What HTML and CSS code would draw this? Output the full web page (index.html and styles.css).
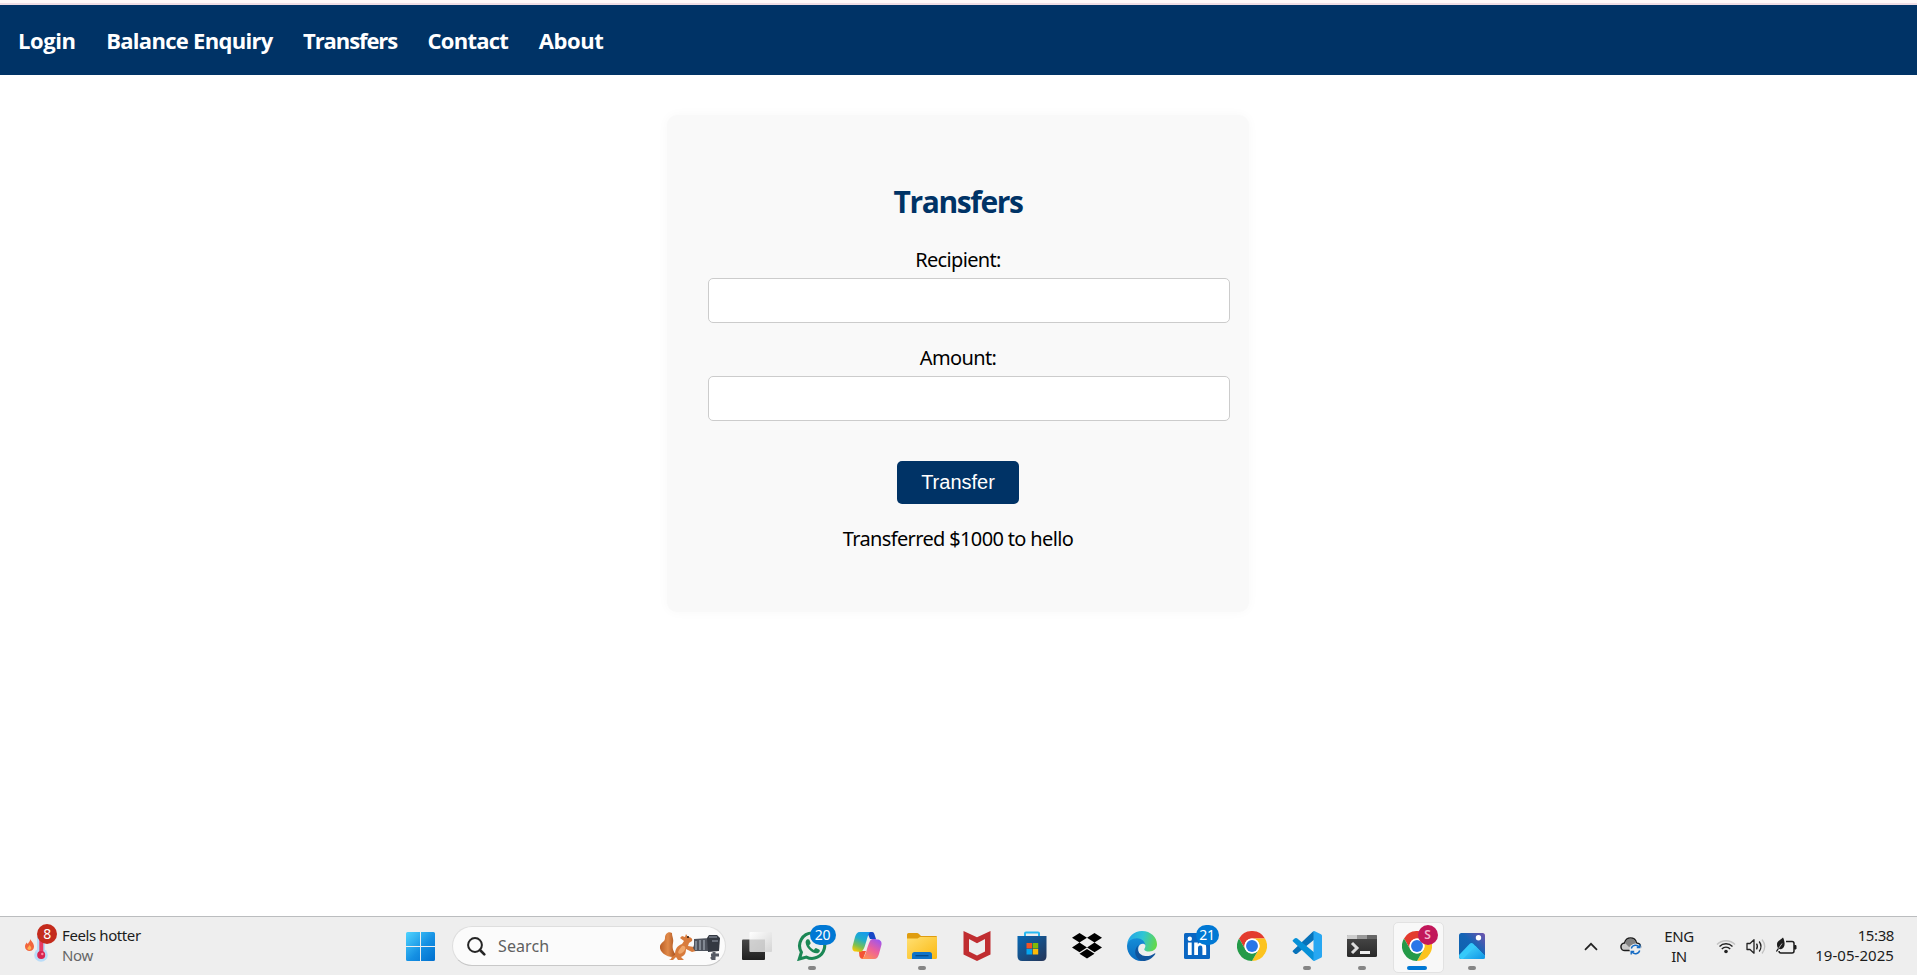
FILE: index.html
```html
<!DOCTYPE html>
<html lang="en">
<head>
<meta charset="utf-8">
<title>Transfers</title>
<link rel="stylesheet" href="styles.css">
</head>
<body>
<div class="top-strip"></div>
<nav class="nav">
  <a class="nav-link login">Login</a>
  <a class="nav-link balance">Balance Enquiry</a>
  <a class="nav-link transfers">Transfers</a>
  <a class="nav-link contact">Contact</a>
  <a class="nav-link about">About</a>
</nav>
<main class="main">
  <form class="card">
    <h2 class="title">Transfers</h2>
    <label class="label" for="recipient">Recipient:</label>
    <input class="field" id="recipient" type="text">
    <label class="label" for="amount">Amount:</label>
    <input class="field" id="amount" type="text">
    <button class="submit" type="button">Transfer</button>
    <p class="message">Transferred $1000 to hello</p>
  </form>
</main>
<footer class="taskbar">
  <div class="weather">
    <div class="weather-icon">
      <svg width="34" height="40" viewBox="0 0 34 40">
        <circle cx="17" cy="29" r="6.8" fill="#b9dcf8"/><path d="M13 10h8v17h-8z" fill="#b9dcf8"/>
        <path d="M15.3 10h4v16h-4z" fill="#e83a62"/><circle cx="17.2" cy="29" r="4" fill="#d82450"/><circle cx="18.3" cy="28" r="1.2" fill="#ff8ca5"/>
        <path d="M6 13c1 2 4 4 4 7.500a4.500 4.500 0 0 1-9 .2c0-2 1-3 1.600-4.200l1.200 1.400C5 16 6.400 15 6 13z" fill="#f2663d"/>
        <path d="M5.500 19c.6 1 2 2 1.800 3.600a2.200 2.200 0 0 1-4 0c0-1.200 1.800-2 2.200-3.600z" fill="#ffb052"/>
      </svg>
      <span class="badge red">8</span>
    </div>
    <div class="two-lines raised"><span class="line1">Feels hotter</span><span class="line2 muted">Now</span></div>
  </div>
  <div class="start">
    <svg width="29" height="29" viewBox="0 0 29 29"><defs><linearGradient id="win" gradientUnits="userSpaceOnUse" x1="0" y1="0" x2="29" y2="29"><stop offset="0" stop-color="#4fd4ff"/><stop offset=".55" stop-color="#1590e3"/><stop offset="1" stop-color="#006fce"/></linearGradient></defs>
    <path d="M1.500 0H14v14H0V1.500A1.500 1.500 0 0 1 1.500 0zM15 0h12.500A1.500 1.500 0 0 1 29 1.500V14H15zM0 15h14v14H1.500A1.500 1.500 0 0 1 0 27.500zM15 15h14v12.500a1.500 1.500 0 0 1-1.500 1.500H15z" fill="url(#win)"/></svg>
  </div>
  <div class="search">
    <svg class="search-icon" width="19" height="19" viewBox="0 0 19 19" fill="none" stroke="#252525"><circle cx="8" cy="8" r="6.900" stroke-width="2"/><path d="M13 13l4.300 4.300" stroke-width="2.600" stroke-linecap="round"/></svg>
    <span class="search-text">Search</span>
    <svg class="squirrel" width="62" height="32" viewBox="0 0 62 32">
      <defs><linearGradient id="tail" x1="0" x2="1"><stop offset="0" stop-color="#b95d25"/><stop offset=".5" stop-color="#e18a49"/><stop offset="1" stop-color="#a64d1b"/></linearGradient></defs>
      <path d="M14 27C7 27 0 22 1 16c1-4 5-4 5-8C6 4 9 1 13 3c0 4 2 6 1 10-1 5 0 8 3 12z" fill="url(#tail)"/>
      <path d="M12 29c1-3 2-3 4-4 0-6 2-9 7-11l2-3-4-3 2-2 3 1 1-3 2 3c3 0 5 2 4 4l-3 2-1 3 6 1 2 4-4 1-6-3c0 5-2 7-5 8l3 3h-6l-2-3-3 3h-4z" fill="#d87b3c"/>
      <path d="M23 16c4-1 5 4 0 7-3 2-5 0-3-3z" fill="#efa76b"/><circle cx="29" cy="7" r="1" fill="#2b160c"/>
      <path d="M35 9l16-1v13H36l-2-3 1-3z" fill="#4f545e"/><path d="M37 11v9M41 10v10M45 10v10" stroke="#949aa5" stroke-width="1.500"/>
      <path d="M48 8l2-3h8l3 3-1 13-11 1z" fill="#343942"/><path d="M50 7h8M53 11h6" stroke="#777e89" stroke-width="1.500"/><path d="M55 22v8M52 25h8M52 29l4-3" stroke="#555a64" stroke-width="3"/>
    </svg>
  </div>
  <div class="apps">
    <div class="app"><svg width="30" height="30" viewBox="0 0 30 30"><defs><linearGradient id="tvd" x1="0" y1="0" x2="0" y2="1"><stop offset="0" stop-color="#474747"/><stop offset="1" stop-color="#202020"/></linearGradient><linearGradient id="tvl" x1="0" y1="0" x2="1" y2="1"><stop offset="0" stop-color="#fff"/><stop offset="1" stop-color="#d4d4d4"/></linearGradient></defs><rect y="8.500" width="23" height="20.500" rx="1" fill="url(#tvd)"/><rect x="7.500" y="1" width="22.500" height="20" rx="1" fill="url(#tvl)"/><path d="M8 8.500h15V21H8z" fill="#bdbdbd" opacity=".65"/></svg></div>
    <div class="app"><svg width="30" height="30" viewBox="0 0 30 30" fill="none"><path d="M15.300 2A12.700 12.700 0 0 0 4.400 21.200L2.300 28l7.100-1.900A12.700 12.700 0 1 0 15.300 2z" stroke="#1b8755" stroke-width="3.100"/><path d="M10.500 8.200c-.8.1-2 1.400-1.900 3.200.3 4.800 5.800 10.400 10.900 10.900 1.800 0 3.300-1.200 3.300-2.600 0-.7-.2-1-.7-1.200l-2.700-1.300c-.6-.3-1-.1-1.400.4l-1.100 1.300c-2-.8-3.800-2.500-4.800-4.600l1.200-1.400c.4-.5.4-.9.2-1.400l-1.200-2.700c-.3-.6-.8-.8-1.800-.6z" fill="#1b8755"/></svg><span class="badge blue b20">20</span><i class="dot"></i></div>
    <div class="app"><svg width="30" height="30" viewBox="0 0 30 30"><defs><linearGradient id="cp1" x1=".6" y1="0" x2=".2" y2="1"><stop offset="0" stop-color="#169bea"/><stop offset=".35" stop-color="#20aeca"/><stop offset=".7" stop-color="#7cbf51"/><stop offset="1" stop-color="#ffc900"/></linearGradient><linearGradient id="cp2" x1=".8" y1="0" x2=".2" y2="1"><stop offset="0" stop-color="#9d55ef"/><stop offset=".5" stop-color="#ed609b"/><stop offset="1" stop-color="#ff9254"/></linearGradient></defs>
    <path d="M15 1h5c2 0 2.400 2 3 4l1 3h-6z" fill="#1647c6"/><path d="M7 20h7l-3 8c-2 0-3-1-3.600-3z" fill="#f45335"/>
    <path d="M8 1h10c-3 3-4 14-7 18-1 2-3 2-7 1.500-3 0-4-2-3.500-5L3 6C4 3 5 1 8 1z" fill="url(#cp1)"/>
    <path d="M22 28H10c4-2 5-13 8-18 1-2 3-2.300 7-1.600 3 0 5 2 4.500 5L27 23c-1 3-2 5-5 5z" fill="url(#cp2)"/></svg></div>
    <div class="app"><svg width="30" height="30" viewBox="0 0 30 30"><defs><linearGradient id="fo" x1="0" y1="0" x2="1" y2="1"><stop offset="0" stop-color="#ffe073"/><stop offset="1" stop-color="#fbb911"/></linearGradient></defs><path d="M0 3.500Q0 2 1.500 2H10q1 0 2 1l2 2h15q1 0 1 1v10H0z" fill="#df9d10"/><path d="M0 7.500h10.500L13 6h17v20.500q0 1.500-1.500 1.500h-27Q0 28 0 26.500z" fill="url(#fo)"/><path d="M5 28v-4.500Q5 21 7.500 21h15q2.500 0 2.500 2.500V28z" fill="#0f73c7"/><path d="M8.500 24.700h13" stroke="#064987" stroke-width="1.300"/></svg><i class="dot"></i></div>
    <div class="app"><svg width="30" height="30" viewBox="0 0 30 30"><path d="M1.500 0L15 6.300 28.500 0v23.500L15 30 1.500 23.500z" fill="#c02d30"/><path d="M7 8l8 4.300L23 8v12.500L15 24.500 7 20.500z" fill="#eee"/></svg></div>
    <div class="app"><svg width="30" height="30" viewBox="0 0 30 30"><defs><linearGradient id="st" x1="0" y1="0" x2="1" y2="1"><stop offset="0" stop-color="#0869b5"/><stop offset="1" stop-color="#263456"/></linearGradient></defs><path d="M8 6V2.300Q8 1.500 9 1.500h12q1 0 1 .8V6" fill="none" stroke="#27b9f2" stroke-width="2"/><path d="M.5 5h29v20q0 5-4.500 5H5Q.5 30 .5 25z" fill="url(#st)"/><path d="M9.500 12H15v5.500H9.500z" fill="#f35325"/><path d="M15.700 12h5.500v5.500h-5.500z" fill="#81bc06"/><path d="M9.500 18H15v5.500H9.500z" fill="#05a6f0"/><path d="M15.700 18h5.500v5.500h-5.500z" fill="#ffba08"/></svg></div>
    <div class="app"><svg width="30" height="30" viewBox="0 0 30 30"><path d="M7.500 2L15 6.800 7.500 11.600 0 6.800zM22.500 2L30 6.800l-7.500 4.800L15 6.800zM7.500 11.600l7.500 4.800-7.500 4.800L0 16.400zM22.500 11.600l7.500 4.800-7.500 4.800-7.500-4.800zM7.500 22.700L15 18l7.500 4.700L15 27.500z" fill="#000"/></svg></div>
    <div class="app"><svg width="30" height="30" viewBox="0 0 24 24"><defs><linearGradient id="ed1" x1="0" y1=".3" x2="1" y2=".5"><stop offset="0" stop-color="#24a4e8"/><stop offset=".5" stop-color="#2fc5d4"/><stop offset="1" stop-color="#64d849"/></linearGradient><linearGradient id="ed2" x1="0" y1="0" x2="0" y2="1"><stop offset="0" stop-color="#168ed8"/><stop offset="1" stop-color="#0969bd"/></linearGradient></defs>
    <path d="M.1 10.700C.8 4.500 5.600 0 12 0c7 0 12 5.100 12 10.600 0 3.500-2.700 5.800-6 5.800-3 0-4.500-1.100-4.200-1.900.5-1 .9-1.500.9-2.500 0-3-3-5-6.500-5C4.400 7 1 9 .1 10.700z" fill="url(#ed1)"/>
    <path d="M0 12c.2-4 4-6.300 8-6.300 3.500 0 6.500 2.400 6.700 5.600-1.500-2.100-5.200-1-5.700 2.300-.6 4.500 3 8.400 7.200 8.400-1.500 1.500-3.500 2-4.900 2C5 23.900 0 18.500 0 12z" fill="url(#ed2)"/>
    <path d="M9.700 11C7 13.500 8.700 19.400 14.500 20c3 .3 5.500-.8 7.500-2.100.5-.3.900.1.500.7C20.300 22 16.500 24 13 24c-5.600-.2-9.400-8.500-3.300-13z" fill="#11549c"/></svg></div>
    <div class="app"><svg width="30" height="30" viewBox="0 0 30 30"><rect x="2" y="2" width="26" height="26" rx="1.500" fill="#0a66c2"/><circle cx="7.800" cy="7.800" r="2.200" fill="#fff"/><path d="M5.900 11.500h3.800V24H5.900zM12.200 11.500h3.600v1.700c.7-1.200 2-2 3.900-2 3.800 0 4.500 2.500 4.500 5.900V24h-3.800v-6.200c0-1.500 0-3.300-2.100-3.300s-2.300 1.600-2.300 3.200V24h-3.800z" fill="#fff"/></svg><span class="badge blue b21">21</span></div>
    <div class="app"><svg width="30" height="30" viewBox="0 0 48 48"><g id="chrome"><circle cx="24" cy="24" r="24" fill="#fff"/><path d="M3.200 12A24 24 0 0 1 44.800 12H24a12 12 0 0 0-10.400 18z" fill="#e33b2e"/><path d="M44.800 12A24 24 0 0 1 24 48l10.400-18A12 12 0 0 0 24 12z" fill="#fcc31e"/><path d="M24 48A24 24 0 0 1 3.200 12l10.400 18a12 12 0 0 0 20.800 0z" fill="#249a48"/><circle cx="24" cy="24" r="12" fill="#fff"/><circle cx="24" cy="24" r="9.500" fill="#2a76e8"/></g></svg></div>
    <div class="app"><svg width="30" height="30" viewBox="0 0 30 30"><path d="M1 19.500L21.500 0l2 7.500L5 22.700q-1.300.8-2.400-.2L1 21q-1-.7 0-1.500z" fill="#0872b9"/><path d="M1 10.500L21.500 30l2-7.500L5 7.300Q3.700 6.500 2.600 7.500L1 9q-1 .7 0 1.500z" fill="#0791d8"/><path d="M21.500 0q.7-.1 1.300.2l6.200 3q1 .5 1 1.600v20.400q0 1.100-1 1.600l-6.200 3q-.7.300-1.300.2z" fill="#27a7f2"/></svg><i class="dot"></i></div>
    <div class="app"><svg width="30" height="30" viewBox="0 0 30 30"><defs><linearGradient id="te" x1="0" y1="0" x2="0" y2="1"><stop offset="0" stop-color="#4a4a4a"/><stop offset="1" stop-color="#292929"/></linearGradient></defs><rect y="4" width="30" height="22" rx="1.500" fill="url(#te)"/><path d="M0 8V5q0-1 1-1h9v4z" fill="#ccc"/><path d="M10 4h10v4H10z" fill="#999"/><path d="M20 4h9q1 0 1 1v3H20z" fill="#666"/><path d="M5 12l5 5-5 5" fill="none" stroke="#ddd" stroke-width="3"/><path d="M13 20h10v3H13z" fill="#eee"/></svg><i class="dot"></i></div>
    <div class="app active"><svg width="30" height="30" viewBox="0 0 48 48"><use href="#chrome"/></svg><span class="badge profile">S</span><i class="dot wide"></i></div>
    <div class="app"><svg width="30" height="30" viewBox="0 0 30 30"><defs><linearGradient id="ph" x1="0" y1="1" x2="1" y2="0"><stop offset="0" stop-color="#0d62ad"/><stop offset=".55" stop-color="#1464b5"/><stop offset="1" stop-color="#7253ad"/></linearGradient><linearGradient id="mt" x1="0" y1="0" x2="1" y2="1"><stop offset="0" stop-color="#4bdcff"/><stop offset="1" stop-color="#078ce2"/></linearGradient><clipPath id="pc"><rect x="2" y="2" width="26" height="26" rx="2.500"/></clipPath></defs><g clip-path="url(#pc)"><rect x="2" y="2" width="26" height="26" fill="url(#ph)"/><path d="M2 24l10.500-11q2-2 4 0L30 27v2H2z" fill="#35c9fa"/><path d="M5 29l9.500-10 4-4L30 27v3z" fill="url(#mt)"/></g><circle cx="21.500" cy="6.700" r="2.700" fill="#fff"/></svg><i class="dot"></i></div>
  </div>
  <div class="tray">
    <svg class="chevron" width="14" height="9" viewBox="0 0 14 9" fill="none" stroke="#222" stroke-width="1.700"><path d="M1 7.800l6-6 6 6"/></svg>
    <svg class="cloud" width="22" height="20" viewBox="0 0 22 20"><path d="M5 14.500a3.800 3.800 0 0 1-.5-7.600C5.500 3.800 7.500 2 10.500 2c3.200 0 5.300 1.900 6 4.900 2.600.2 4 1.800 4 3.900s-1.500 3.700-3.500 3.700z" fill="#c9c9c9" stroke="#1c1c1c" stroke-width="1.500"/><path d="M5 7c1-3 3-4.500 5.500-4.500 3 0 5.200 2 5.700 5L9 11z" fill="#818181"/><circle cx="15.500" cy="13.500" r="6" fill="#eee"/><path d="M11.300 12.500a4.400 4.400 0 0 1 8-1.200M19.800 8.500v3h-3M19.700 14.500a4.400 4.400 0 0 1-8 1.200M11.200 18.500v-3h3" fill="none" stroke="#176cc4" stroke-width="1.400"/></svg>
    <div class="two-lines lang"><span class="line1">ENG</span><span class="line2">IN</span></div>
    <svg class="wifi" width="20" height="16" viewBox="0 0 20 16" fill="none" stroke-width="1.400"><path d="M1 6.500a12.700 12.700 0 0 1 18 0" stroke="#c2c2c2"/><path d="M3.500 8.500a9.200 9.200 0 0 1 13 0M5.800 10.900a5.900 5.900 0 0 1 8.400 0" stroke="#222"/><circle cx="10" cy="13.500" r="1.800" fill="#222"/></svg>
    <svg class="speaker" width="21" height="17" viewBox="0 0 21 17" fill="none" stroke="#222" stroke-width="1.300"><path d="M1 5.500h3L8 1.800v13.400L4 11.500H1z" stroke-linejoin="round"/><path d="M10.500 5.700q1.800 2.800 0 5.600M13.200 3.500q3.600 5 0 10"/><path d="M16 1.500q5.500 7 0 14" stroke="#c2c2c2"/></svg>
    <svg class="battery" width="21" height="18" viewBox="0 0 21 18" fill="none" stroke="#1c1c1c"><path d="M10 4.500h6a2 2 0 0 1 2 2V14a2 2 0 0 1-2 2H5a2 2 0 0 1-2-2" stroke-width="1.500"/><path d="M18.500 8.500h1.500v3.500h-1.500z" fill="#1c1c1c"/><path d="M1 7c0-3 3-3.500 6-6.500 2.500 5 2.200 10-1.500 11.500-1 .4-2 0-2.500-.3L.8 15 0 14l2-3C1.300 10 1 8.600 1 7z" fill="#1c1c1c" stroke="none"/><path d="M2.500 11.500L6 6.500" stroke="#ddd" stroke-width=".8"/></svg>
    <div class="two-lines clock raised"><span class="line1">15:38</span><span class="line2 date">19-05-2025</span></div>
  </div>
</footer>
</body>
</html>
```
FILE: styles.css
```css
* { box-sizing: border-box; }
body {
  margin: 0;
  height: 975px;
  display: flex;
  flex-direction: column;
  background: #fff;
  color: #000;
  font-family: "Noto Sans", "Open Sans", sans-serif;
  font-size: 20px;
  overflow: hidden;
}
.top-strip { height: 5px; background: #fdf8f8; border-bottom: 2px solid #efdde4; flex: none; }
.nav {
  height: 70px;
  flex: none;
  background: #003366;
  display: flex;
  align-items: center;
  padding: 0 18px;
  gap: 30.5px;
}
.nav-link {
  color: #fff;
  font-family: "Open Sans", "Noto Sans", sans-serif;
  font-weight: 700;
  font-size: 22px;
  line-height: 30px;
  letter-spacing: -0.4px;
  white-space: nowrap;
}
.balance { letter-spacing: -0.7px; }
.transfers { letter-spacing: -1.1px; }
.contact { letter-spacing: -0.75px; }
.main { flex: 1; display: flex; justify-content: center; align-items: flex-start; padding: 40px 1px 0 0; }
.card {
  width: 582px;
  height: 497px;
  padding: 67px 40px 0;
  border-radius: 10px;
  background: #f9f9f9;
  box-shadow: 0 0 12px rgba(0, 0, 0, 0.03);
  text-align: center;
}
.title { margin: 0 0 23px; font: 700 30px/40px "Open Sans", "Noto Sans", sans-serif; color: #003366; letter-spacing: -1.4px; }
.label { display: block; height: 33px; line-height: 30px; letter-spacing: -0.65px; }
.field { display: block; width: 522px; height: 45px; margin: 0 0 20px 1px; border: 1px solid #ccc; border-radius: 5px; background: #fff; }
.submit { display: block; width: 122px; height: 43px; margin: 40px auto 0; padding: 0; border: 0; border-radius: 5px; background: #003366; color: #fff; font: 20px "Liberation Sans", Arial, sans-serif; }
.message { margin: 20px 0 0; line-height: 30px; letter-spacing: -0.65px; }

.taskbar { height: 59px; flex: none; border-top: 1px solid #bbbdbf; background: #eee; display: flex; align-items: center; color: #1c1c1c; font-size: 15px; }
.weather { width: 406px; display: flex; align-items: center; padding-left: 24px; }
.weather-icon { width: 38px; height: 40px; position: relative; }
.two-lines { display: flex; flex-direction: column; line-height: 20px; letter-spacing: -0.4px; white-space: nowrap; }
.raised { padding-bottom: 2px; }
.muted { color: #666; }
.badge { position: absolute; display: flex; align-items: center; justify-content: center; height: 20px; border-radius: 10px; color: #fff; font-size: 14px; line-height: 20px; letter-spacing: -0.3px; }
.red { width: 20px; left: 13px; top: -2px; background: #c42b1c; }
.blue { background: #0078d4; }
.b20 { width: 26px; left: 25px; top: 8px; }
.b21 { width: 23px; left: 26px; top: 8px; }
.profile { width: 20px; left: 28px; top: 8px; background: #c2185b; color: #f5b6d0; font-size: 12px; font-weight: 600; }
.start { width: 46px; height: 29px; }
.search { width: 274px; height: 40px; border: 1px solid #dedede; border-bottom-color: #c8c8c8; border-radius: 20px; background: #fbfbfb; display: flex; align-items: center; padding: 0 4px 0 14px; }
.search-text { margin-left: 12px; font-size: 16px; color: #606060; letter-spacing: 0.1px; }
.squirrel { margin-left: auto; }
.apps { display: flex; height: 58px; margin-left: 3.5px; }
.app { width: 55px; height: 58px; position: relative; display: flex; align-items: center; justify-content: center; }
.app svg { position: relative; }
.active::before { content: ""; position: absolute; left: 3px; top: 5px; width: 49px; height: 49px; border: 1px solid #e2e2e2; border-radius: 5px; background: #f8f8f8; }
.dot { position: absolute; left: 23.5px; bottom: 5px; width: 8px; height: 4px; border-radius: 2px; background: #858585; }
.wide { left: 17.5px; width: 20px; background: #0078d4; }
.tray { margin-left: auto; display: flex; align-items: center; padding-right: 23px; }
.cloud { margin-left: 22px; }
.lang { align-items: center; width: 30px; margin-left: 22px; }
.wifi { margin-left: 22px; }
.speaker { margin-left: 10px; }
.battery { margin-left: 9px; }
.clock { align-items: flex-end; width: 80px; margin-left: 17px; }
.date { letter-spacing: 0.05px; }
```
